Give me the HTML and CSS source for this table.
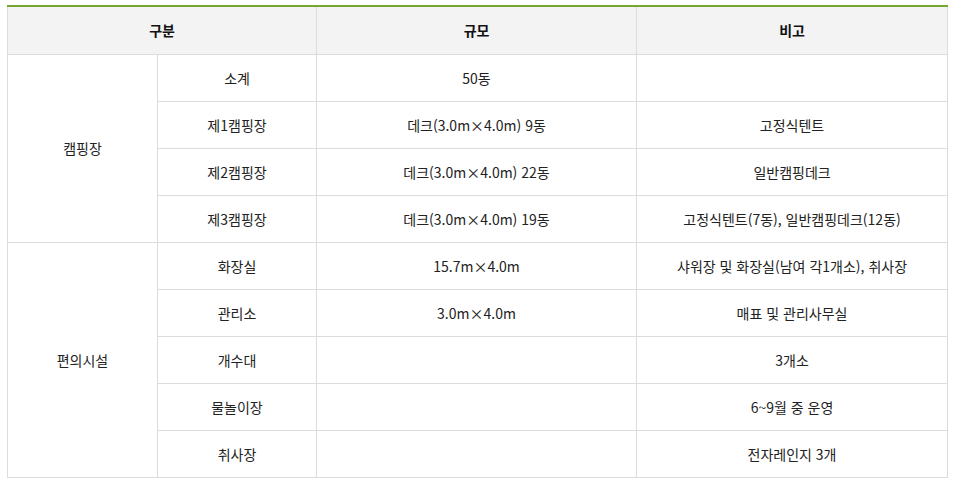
FILE: index.html
```html
<!DOCTYPE html>
<html lang="ko">
<head>
<meta charset="utf-8">
<link rel="stylesheet" href="styles.css">
</head>
<body>
<table class="tbl">
  <colgroup>
    <col class="c1"><col class="c2"><col class="c3"><col class="c4">
  </colgroup>
  <thead>
    <tr><th colspan="2">구분</th><th>규모</th><th>비고</th></tr>
  </thead>
  <tbody>
    <tr><td rowspan="4">캠핑장</td><td>소계</td><td>50동</td><td></td></tr>
    <tr><td>제1캠핑장</td><td>데크(3.0m×4.0m) 9동</td><td>고정식텐트</td></tr>
    <tr><td>제2캠핑장</td><td>데크(3.0m×4.0m) 22동</td><td>일반캠핑데크</td></tr>
    <tr><td>제3캠핑장</td><td>데크(3.0m×4.0m) 19동</td><td>고정식텐트(7동), 일반캠핑데크(12동)</td></tr>
    <tr><td rowspan="5">편의시설</td><td>화장실</td><td>15.7m×4.0m</td><td>샤워장 및 화장실(남여 각1개소), 취사장</td></tr>
    <tr><td>관리소</td><td>3.0m×4.0m</td><td>매표 및 관리사무실</td></tr>
    <tr><td>개수대</td><td></td><td>3개소</td></tr>
    <tr><td>물놀이장</td><td></td><td>6~9월 중 운영</td></tr>
    <tr><td>취사장</td><td></td><td>전자레인지 3개</td></tr>
  </tbody>
</table>
</body>
</html>
```
FILE: styles.css
```css
html, body { margin: 0; padding: 0; background: #fff; }
body { padding: 5px 0 0 7px; font-family: "Noto Sans CJK KR", "Noto Sans", sans-serif; color: #222; }
.tbl { border-collapse: collapse; table-layout: fixed; width: 940px; border-top: 2px solid #76a62f; font-size: 14px; }
.c1 { width: 150px; }
.c2 { width: 159px; }
.c3 { width: 320px; }
.c4 { width: 311px; }
.tbl th, .tbl td { border: 1px solid #dcdcdc; padding: 0 6px; text-align: center; vertical-align: middle; line-height: 20px; box-sizing: border-box; }
.tbl thead th { border-top: none; background: #f3f3f3; font-weight: bold; color: #111; height: 48px; }
.tbl tbody td { height: 47px; }
```
